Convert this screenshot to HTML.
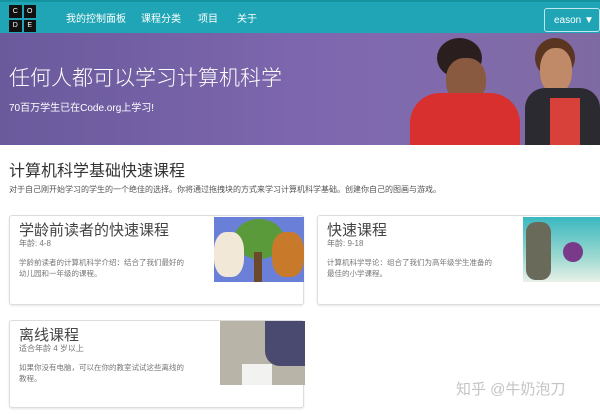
<!DOCTYPE html>
<html><head><meta charset="utf-8"><style>
*{margin:0;padding:0;box-sizing:border-box}
body{width:600px;height:414px;overflow:hidden;background:#fff;font-family:"Liberation Sans","Noto Sans CJK SC",sans-serif;position:relative}
.nav{position:absolute;left:0;top:0;width:600px;height:33px;background:#1fa5b5;border-top:2px solid #12939f}
.logo{position:absolute;left:9px;top:3px;width:27px;height:27px;display:grid;grid-template-columns:1fr 1fr;gap:2px}
.logo span{background:#111;color:#fff;font-size:7px;display:flex;align-items:center;justify-content:center}
.nav a{position:absolute;top:8px;color:#fff;font-size:10px}
.user{position:absolute;left:544px;top:6px;width:56px;height:24px;border:1px solid #bfe8ee;border-radius:3px;color:#fff;font-size:10px;padding:6px 0 0 9px}
.hero{position:absolute;left:0;top:33px;width:600px;height:112px;background:linear-gradient(90deg,#6a5a9c,#7d66ad 50%,#8872b5)}
.h1{position:absolute;left:9px;top:62px;color:#fff;font-size:21px;font-weight:300}
.h2{position:absolute;left:9px;top:99px;color:#fff;font-size:10px}
.sec{position:absolute;left:9px;top:157px;font-size:16px;color:#333}
.desc{position:absolute;left:9px;top:184px;font-size:8px;color:#555}
.card{position:absolute;border:1px solid #ddd;border-radius:3px;background:#fff;box-shadow:0 1px 2px rgba(0,0,0,.1)}
.card .t{position:absolute;left:9px;top:3px;font-size:15px;color:#444}
.card .a{position:absolute;left:9px;top:22px;font-size:8px;color:#777}
.card .d{position:absolute;left:9px;top:41px;font-size:7.5px;color:#777;line-height:11px;width:168px}
.img{position:absolute}
</style></head><body>
<div class="nav">
<div class="logo"><span>C</span><span>O</span><span>D</span><span>E</span></div>
<a style="left:66px">我的控制面板</a><a style="left:141px">课程分类</a><a style="left:198px">项目</a><a style="left:237px">关于</a>
<div class="user">eason ▼</div>
</div>
<div class="hero">
<div style="position:absolute;left:380px;top:0;width:220px;height:112px;background:linear-gradient(90deg,rgba(140,120,180,0),rgba(120,100,150,.6))"></div>
<div style="position:absolute;left:437px;top:5px;width:45px;height:40px;border-radius:50%;background:#2a1e1e"></div>
<div style="position:absolute;left:446px;top:25px;width:40px;height:45px;border-radius:45%;background:#8a5a40"></div>
<div style="position:absolute;left:410px;top:60px;width:110px;height:52px;border-radius:30px 30px 0 0;background:#d8302e"></div>
<div style="position:absolute;left:535px;top:5px;width:40px;height:40px;border-radius:50%;background:#5a3520"></div>
<div style="position:absolute;left:540px;top:15px;width:32px;height:45px;border-radius:45%;background:#c08a68"></div>
<div style="position:absolute;left:525px;top:55px;width:75px;height:57px;border-radius:20px 20px 0 0;background:#2a2a30"></div>
<div style="position:absolute;left:550px;top:65px;width:30px;height:47px;background:#d8403a"></div>
</div>
<div class="h1">任何人都可以学习计算机科学</div>
<div class="h2">70百万学生已在Code.org上学习!</div>
<div class="sec">计算机科学基础快速课程</div>
<div class="desc">对于自己刚开始学习的学生的一个绝佳的选择。你将通过拖拽块的方式来学习计算机科学基础。创建你自己的图画与游戏。</div>
<div class="card" style="left:9px;top:215px;width:295px;height:90px">
<div class="t">学龄前读者的快速课程</div><div class="a">年龄:  4-8</div>
<div class="d">学龄前读者的计算机科学介绍：结合了我们最好的幼儿园和一年级的课程。</div>
<div class="img" style="left:204px;top:1px;width:90px;height:65px;background:#6a80d8">
<div style="position:absolute;left:20px;top:2px;width:50px;height:40px;border-radius:50%;background:#5a9a3a"></div>
<div style="position:absolute;left:40px;top:35px;width:8px;height:30px;background:#6a4a2a"></div>
<div style="position:absolute;left:0;top:15px;width:30px;height:45px;border-radius:40%;background:#f2e8d8"></div>
<div style="position:absolute;left:58px;top:15px;width:32px;height:45px;border-radius:40%;background:#c87a2a"></div>
</div></div>
<div class="card" style="left:317px;top:215px;width:290px;height:90px">
<div class="t">快速课程</div><div class="a">年龄:  9-18</div>
<div class="d">计算机科学导论：组合了我们为高年级学生准备的最佳的小学课程。</div>
<div class="img" style="left:205px;top:1px;width:80px;height:65px;background:linear-gradient(#3ab8c0,#9ad8d0 60%,#e8f0e8)">
<div style="position:absolute;left:3px;top:5px;width:25px;height:58px;border-radius:10px;background:#6a6a5a"></div>
<div style="position:absolute;left:40px;top:25px;width:20px;height:20px;border-radius:50%;background:#7a3a8a"></div>
</div></div>
<div class="card" style="left:9px;top:320px;width:295px;height:88px">
<div class="t">离线课程</div><div class="a">适合年龄 4 岁以上</div>
<div class="d">如果你没有电脑，可以在你的教室试试这些离线的教程。</div>
<div class="img" style="left:210px;top:0;width:85px;height:64px;background:#b8b4a8">
<div style="position:absolute;left:45px;top:0;width:40px;height:45px;background:#4a4a70;border-radius:0 0 0 15px"></div>
<div style="position:absolute;left:22px;top:43px;width:30px;height:21px;background:#f2f2f0"></div>
</div></div>
<div style="position:absolute;left:456px;top:378px;font-size:15px;color:#c4c4c4">知乎 @牛奶泡刀</div>
</body></html>
